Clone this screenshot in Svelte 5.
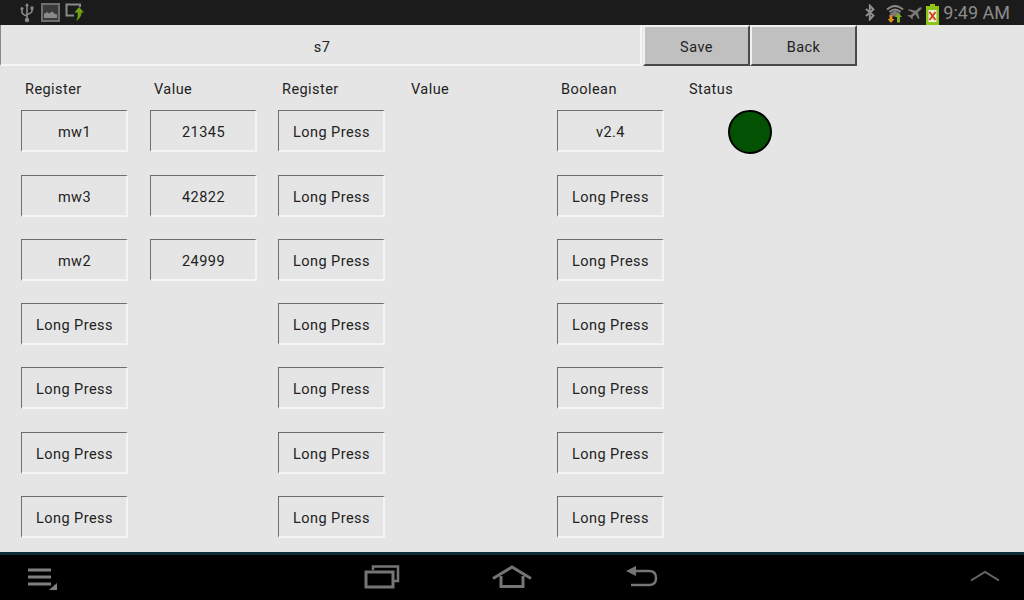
<script>
  const lp = 'Long Press';
  const col1 = ['mw1', 'mw3', 'mw2', lp, lp, lp, lp];
  const col2 = ['21345', '42822', '24999'];
  const col3 = [lp, lp, lp, lp, lp, lp, lp];
  const col5 = ['v2.4', lp, lp, lp, lp, lp, lp];
  const headers = ['Register', 'Value', 'Register', 'Value', 'Boolean', 'Status'];
</script>

<div class="screen">
  <header class="status">
    <div class="left">
      <svg width="16" height="20" viewBox="0 0 16 20" class="usb">
        <g fill="none" stroke="#8a8a8a" stroke-width="1.6">
          <path d="M8 2V17"/>
          <path d="M3 6V9Q3 11.5 8 13"/>
          <path d="M13 5V8Q13 10 8 11.5"/>
        </g>
        <path d="M8 0L10 3H6Z" fill="#8a8a8a"/>
        <circle cx="8" cy="17" r="2.2" fill="#8a8a8a"/>
        <circle cx="3" cy="5.5" r="1.5" fill="#8a8a8a"/>
        <rect x="11.5" y="3.5" width="3" height="3" fill="#8a8a8a"/>
      </svg>
      <svg width="19" height="19" viewBox="0 0 19 19" class="pic">
        <rect x="1" y="1" width="17" height="17" fill="#3a3a3a" stroke="#6e6e6e" stroke-width="2"/>
        <path d="M3 15V11L6 9L8 10.5L11 8.5L14 11L16 11.5V15Z" fill="#8a8a8a"/>
      </svg>
      <svg width="20" height="19" viewBox="0 0 20 19" class="shot">
        <path d="M15 4V1.5H1.5V12.5H9" fill="none" stroke="#8a8a8a" stroke-width="2"/>
        <path d="M14 4L19 9.5H16.5Q16.5 15 11 18Q13.5 14 12.5 9.5H9.5Z" fill="#6f9f12"/>
      </svg>
    </div>
    <div class="right">
      <svg width="10" height="17" viewBox="0 0 10 16" class="bt">
        <path d="M1 4.500L8.500 11L4.800 15V1L8.500 5L1 11.500" fill="none" stroke="#8f8f8f" stroke-width="1.900"/>
      </svg>
      <svg width="18" height="19" viewBox="0 0 18 19" class="wifi">
        <path d="M1 5.500Q9 -1.500 17 5.500M3.500 8Q9 3 14.500 8M6 10.500Q9 8 12 10.500" fill="none" stroke="#8a8a8a" stroke-width="2"/>
        <path d="M3.500 10L9 13L14.500 10L9 6Z" fill="#7a7a7a"/>
        <path d="M3.500 11V15H1.500L5 19L8.500 15H6.500V11Z" fill="#e08a1e"/>
        <path d="M12.500 9L16 13H14V18.500H11V13H9Z" fill="#7fae1c"/>
      </svg>
      <svg width="15" height="13" viewBox="0 0 15 15" class="plane" preserveAspectRatio="none">
        <path d="M14.500 .5Q13 0 11.500 1.500L8.800 4.200L1.800 2.500L.8 3.500L6.500 6.500L3.500 9.500L1.300 9.200L.5 10L3.300 11.700L5 14.500L5.800 13.700L5.500 11.500L8.500 8.500L11.500 14.200L12.500 13.200L10.800 6.200L13.500 3.500Q15 2 14.500 .5Z" fill="#7a7a7a"/>
      </svg>
      <svg width="13" height="21" viewBox="0 0 13 21" class="batt">
        <rect x="4" y="0" width="5" height="2" fill="#8cc414"/>
        <rect x="0" y="2" width="13" height="19" fill="#8cc414"/>
        <rect x="2.500" y="6" width="8" height="12" fill="#f0f0e0"/>
        <path d="M3.500 8L9.500 16M9.500 8L3.500 16" stroke="#d8401c" stroke-width="2"/>
      </svg>
      <span class="time">9:49 AM</span>
    </div>
  </header>

  <main class="content">
    <div class="topbar">
      <div class="title">s7</div>
      <button class="btn">Save</button>
      <button class="btn">Back</button>
    </div>

    <div class="grid">
      {#each headers as h}
        <div class="head">{h}</div>
      {/each}

      {#each col1 as _, i}
        <div class="cell">{col1[i]}</div>
        {#if col2[i]}<div class="cell">{col2[i]}</div>{:else}<div></div>{/if}
        <div class="cell">{col3[i]}</div>
        <div></div>
        <div class="cell">{col5[i]}</div>
        {#if i === 0}<div class="dot"></div>{:else}<div></div>{/if}
      {/each}
    </div>
  </main>

  <footer class="nav">
    <svg class="menu" width="30" height="24" viewBox="0 0 30 24">
      <path d="M0 3H23M0 10H23M0 17H23" stroke="#808080" stroke-width="3"/>
      <path d="M29 16V23H21Z" fill="#808080"/>
    </svg>
    <div class="mid">
      <svg width="36" height="24" viewBox="0 0 36 24">
        <path d="M9 5V1.500H34V16H30" fill="none" stroke="#757575" stroke-width="2.500"/>
        <rect x="2" y="7" width="27" height="15" fill="none" stroke="#757575" stroke-width="3"/>
      </svg>
      <svg width="40" height="24" viewBox="0 0 40 24">
        <path d="M1 13.500L20 2L39 13.500" fill="none" stroke="#757575" stroke-width="3"/>
        <path d="M9 11V21.500H31V11" fill="none" stroke="#757575" stroke-width="3"/>
      </svg>
      <svg width="32" height="24" viewBox="0 0 32 24">
        <path d="M0 6L10 1V11Z" fill="#757575"/>
        <path d="M8 6H23Q30 6 30 13Q30 20 23 20H5" fill="none" stroke="#757575" stroke-width="2.500"/>
      </svg>
    </div>
    <svg class="up" width="30" height="12" viewBox="0 0 30 12">
      <path d="M1 10.500L15 2L29 10.500" fill="none" stroke="#666" stroke-width="2"/>
    </svg>
  </footer>
</div>

<style>
  :global(body) {
    margin: 0;
    background: #e5e5e5;
  }
  .screen {
    width: 1024px;
    height: 600px;
    display: flex;
    flex-direction: column;
    overflow: hidden;
    background: #e5e5e5;
    font-family: Roboto, "Liberation Sans", sans-serif;
    font-size: 14.5px;
    letter-spacing: 0.45px;
    color: #222;
  }
  .status {
    height: 25px;
    flex: none;
    background: #1b1b1b;
    display: flex;
    justify-content: space-between;
    align-items: center;
  }
  .left {
    display: flex;
    align-items: center;
    gap: 5px;
    padding-left: 19px;
  }
  .pic { margin-left: 1px; }
  .right {
    display: flex;
    align-items: center;
    padding-right: 14px;
  }
  .wifi { margin-left: 11px; margin-top: 2px; }
  .plane { margin-left: 3px; margin-top: 1px; }
  .batt { margin-left: 4px; margin-top: 3px; }
  .time {
    margin-left: 4px;
    font-size: 18px;
    letter-spacing: 0;
    color: #8c8c8c;
    line-height: 25px;
  }
  .content {
    flex: 1;
    min-height: 0;
  }
  .topbar {
    display: flex;
    height: 41px;
  }
  .title {
    width: 642px;
    margin-right: 1px;
    padding-left: 3px;
    text-align: center;
    box-sizing: border-box;
    border-style: solid;
    border-width: 0 2px 2px 1px;
    border-color: transparent #f6f6f6 #f6f6f6 #8a8a8a;
    line-height: 46px;
  }
  .btn {
    width: 107px;
    height: 41px;
    box-sizing: border-box;
    background: #c0c0c0;
    border: 2px solid;
    border-color: #f0f0f0 #4a4a4a #4a4a4a #f0f0f0;
    padding: 3px 0 0;
    font: inherit;
    letter-spacing: inherit;
    color: #222;
  }
  .grid {
    display: grid;
    grid-template-columns: 129px 128px 129px 150px 128px 129px;
    grid-template-rows: 34px 65px 64px 64px 64px 65px 64px 42px;
    padding: 10px 0 0 21px;
  }
  .head {
    padding: 5px 0 0 4px;
    line-height: 17px;
  }
  .cell {
    width: 107px;
    height: 42px;
    box-sizing: border-box;
    border-style: solid;
    border-width: 1px 2px 2px 1px;
    border-color: #6e6e6e #f4f4f4 #f4f4f4 #6e6e6e;
    padding-left: 1px;
    text-align: center;
    line-height: 42px;
    padding-top: 1px;
  }
  .dot {
    width: 44px;
    height: 44px;
    margin-left: 43px;
    box-sizing: border-box;
    border-radius: 50%;
    background: #035203;
    border: 2px solid #000;
  }
  .nav {
    flex: none;
    background: #000;
    border-top: 3px solid #0c2c3a;
    height: 45px;
    display: flex;
    align-items: center;
    position: relative;
  }
  .menu { margin-left: 28px; margin-top: 2px; }
  .mid {
    position: absolute;
    left: 364px;
    top: 10px;
    display: flex;
    gap: 92px;
  }
  .mid svg:nth-child(3) { margin-left: 2px; }
  .up {
    position: absolute;
    left: 970px;
    top: 15px;
  }
</style>
